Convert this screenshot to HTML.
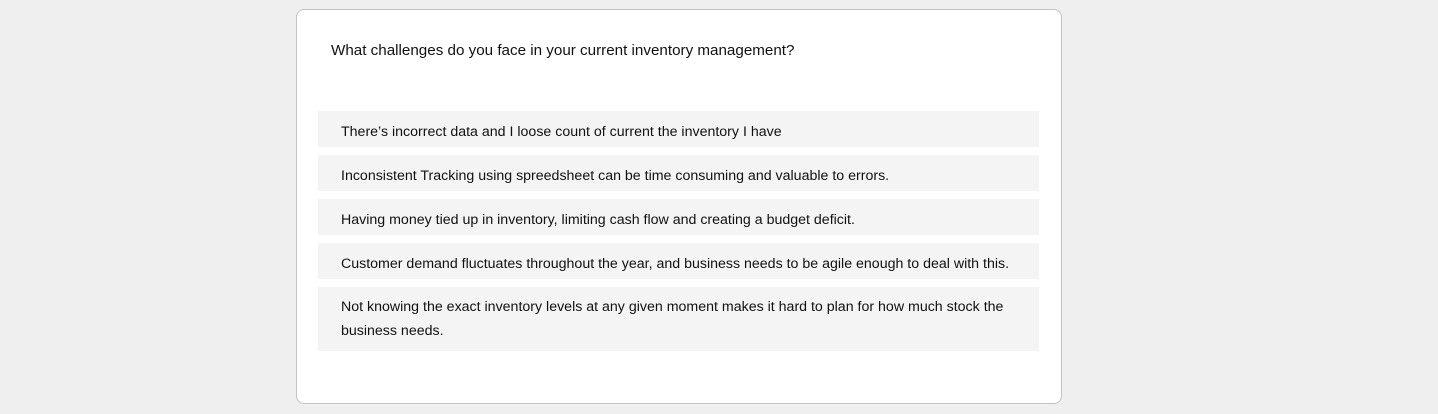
<!DOCTYPE html>
<html><head><style>
body{margin:0;background:#efefef;width:1438px;height:414px;font-family:"Liberation Sans",sans-serif;color:#111;}
.card{position:absolute;left:296px;top:9px;width:766px;height:395px;background:#fff;border:1px solid #c4c4c4;border-radius:8px;box-sizing:border-box;}
.q{position:absolute;left:34px;top:32px;font-size:15.2px;}
.opt{position:absolute;left:21px;width:721px;background:#f4f4f4;font-size:14.2px;box-sizing:border-box;padding:0 23px;line-height:24px;}
</style></head><body>
<div class="card">
<div class="q">What challenges do you face in your current inventory management?</div>
<div class="opt" style="top:101px;height:36px;padding-top:9px">There’s incorrect data and I loose count of current the inventory I have</div>
<div class="opt" style="top:145px;height:36px;padding-top:9px">Inconsistent Tracking using spreedsheet can be time consuming and valuable to errors.</div>
<div class="opt" style="top:189px;height:36px;padding-top:9px">Having money tied up in inventory, limiting cash flow and creating a budget deficit.</div>
<div class="opt" style="top:233px;height:36px;padding-top:9px">Customer demand fluctuates throughout the year, and business needs to be agile enough to deal with this.</div>
<div class="opt" style="top:277px;height:64px;padding-top:8px">Not knowing the exact inventory levels at any given moment makes it hard to plan for how much stock the business needs.</div>
</div>
</body></html>
